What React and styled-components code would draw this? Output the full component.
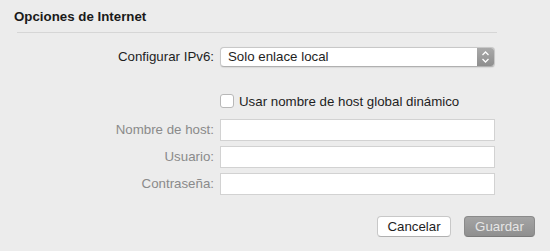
import React from "react";
import styled, { createGlobalStyle } from "styled-components";

const Global = createGlobalStyle`
  html, body { margin: 0; padding: 0; background: #ececec; }
  body { font-family: "Liberation Sans", Arial, sans-serif; font-size: 13.3px; color: #1e1e1e; }
`;

const Page = styled.div`
  width: 550px;
  height: 251px;
  box-sizing: border-box;
  padding: 8px 0 0 14px;
  background: #ececec;
`;

const Title = styled.div`
  font-weight: bold;
  font-size: 13.3px;
  line-height: 18px;
  color: #1a1a1a;
`;

const Separator = styled.div`
  margin: 6px 0 0 3px;
  width: 480px;
  height: 1px;
  background: #d6d6d6;
`;

const Form = styled.div`
  display: grid;
  grid-template-columns: 200px 275px;
  column-gap: 6px;
  margin-top: 14px;
  align-items: center;
`;

const Label = styled.div`
  text-align: right;
  color: ${(p) => (p.$muted ? "#8a8a8a" : "#1e1e1e")};
  font-size: 13.3px;
  line-height: 16px;
`;

const Select = styled.div`
  height: 20px;
  box-sizing: border-box;
  display: flex;
  align-items: stretch;
  background: #fff;
  border: 1px solid #c8c8c8;
  border-bottom-color: #b0b0b0;
  border-radius: 4px;
  overflow: hidden;
  box-shadow: 0 0.5px 1px rgba(0,0,0,0.08);
`;

const SelectText = styled.div`
  flex: 1;
  padding-left: 7px;
  line-height: 18px;
  color: #1e1e1e;
`;

const SelectArrow = styled.div`
  width: 17px;
  background: linear-gradient(#a9a9a9, #8e8e8e);
  display: flex;
  align-items: center;
  justify-content: center;
`;

const Spacer = styled.div`
  height: ${(p) => p.$h}px;
  grid-column: 1 / span 2;
`;

const CheckRow = styled.label`
  grid-column: 2;
  display: flex;
  align-items: center;
  gap: 5px;
  height: 16px;
`;

const Box = styled.span`
  width: 14px;
  height: 14px;
  box-sizing: border-box;
  background: #fff;
  border: 1px solid #b8b8b8;
  border-radius: 3px;
`;

const Input = styled.div`
  height: 22px;
  box-sizing: border-box;
  background: #fff;
  border: 1px solid #d2d2d2;
`;

const Buttons = styled.div`
  display: flex;
  justify-content: flex-end;
  gap: 13px;
  margin-top: 21px;
  width: 521px;
`;

const Button = styled.div`
  height: 21px;
  box-sizing: border-box;
  width: ${(p) => (p.$primary ? 71 : 74)}px;
  flex: none;
  display: flex;
  align-items: center;
  justify-content: center;
  border-radius: 4px;
  font-size: 13.3px;
  color: ${(p) => (p.$primary ? "#e6e6e6" : "#1e1e1e")};
  background: ${(p) => (p.$primary ? "linear-gradient(#a4a4a4, #8f8f8f)" : "#fff")};
  border: 1px solid ${(p) => (p.$primary ? "#8a8a8a" : "#c8c8c8")};
  border-bottom-color: ${(p) => (p.$primary ? "#7a7a7a" : "#b0b0b0")};
`;

function Arrows() {
  return (
    <svg width="9" height="14" viewBox="0 0 9 14">
      <path d="M1.5 5 L4.5 2 L7.5 5" fill="none" stroke="#fff" strokeWidth="1.3" />
      <path d="M1.5 9 L4.5 12 L7.5 9" fill="none" stroke="#fff" strokeWidth="1.3" />
    </svg>
  );
}

export default function App() {
  return (
    <>
      <Global />
      <Page>
        <Title>Opciones de Internet</Title>
        <Separator />
        <Form>
          <Label>Configurar IPv6:</Label>
          <Select>
            <SelectText>Solo enlace local</SelectText>
            <SelectArrow>
              <Arrows />
            </SelectArrow>
          </Select>
          <Spacer $h={26} />
          <CheckRow>
            <Box />
            <span>Usar nombre de host global dinámico</span>
          </CheckRow>
          <Spacer $h={10} />
          <Label $muted>Nombre de host:</Label>
          <Input />
          <Spacer $h={5} />
          <Label $muted>Usuario:</Label>
          <Input />
          <Spacer $h={5} />
          <Label $muted>Contraseña:</Label>
          <Input />
        </Form>
        <Buttons>
          <Button>Cancelar</Button>
          <Button $primary>Guardar</Button>
        </Buttons>
      </Page>
    </>
  );
}
